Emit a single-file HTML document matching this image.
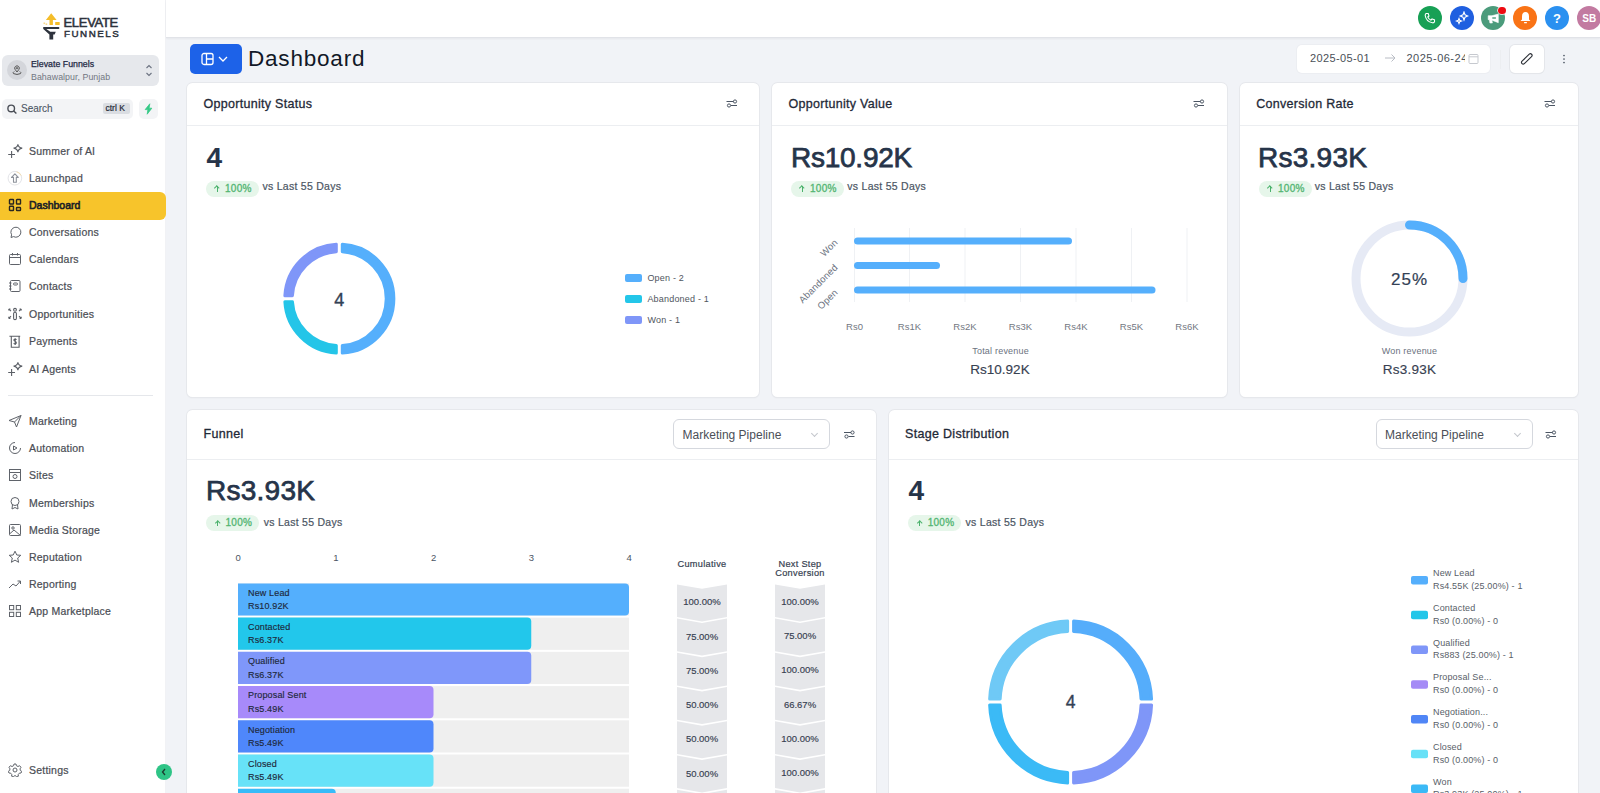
<!DOCTYPE html>
<html><head><meta charset="utf-8">
<style>
*{box-sizing:border-box;margin:0;padding:0}
html,body{width:1600px;height:793px;overflow:hidden;background:#f1f3f7;font-family:"Liberation Sans",sans-serif;color:#1f2937}
.a{position:absolute}
.t{position:absolute;white-space:nowrap;line-height:1}
#sb{position:absolute;left:0;top:0;width:166px;height:793px;background:#fff;border-right:1px solid #f1f2f5}
#top{position:absolute;left:166px;top:0;width:1434px;height:38px;background:#fff;border-bottom:1px solid #e1e3e8;box-shadow:0 1px 2px rgba(0,0,0,.05)}
.card{position:absolute;background:#fff;border-radius:5.5px;box-shadow:0 0 0 1px #e6e8ec,0 1px 1.5px rgba(0,0,0,.07)}
.ch{position:absolute;left:0;right:0;top:0;border-bottom:1px solid #eceef1}
.ttl{position:absolute;font-size:12.5px;color:#1f2937;white-space:nowrap;line-height:1}
.big{position:absolute;font-size:28px;font-weight:400;-webkit-text-stroke:.75px #263449;color:#263449;white-space:nowrap;line-height:1}
.badge{position:absolute;height:16px;width:53px;border-radius:8px;background:#e6f6ea;color:#52b572;font-size:10px;letter-spacing:.27px;-webkit-text-stroke:.3px #52b572;line-height:16px;white-space:nowrap}
.vs{position:absolute;font-size:10.5px;color:#4b5563;letter-spacing:.27px;-webkit-text-stroke:.2px #4b5563;white-space:nowrap;line-height:1}
.nav{position:absolute;left:0;width:166px;height:28px}
.nav span{position:absolute;left:29px;top:9.1px;font-size:10.5px;color:#4b4e55;-webkit-text-stroke:.22px #4b4e55;letter-spacing:.22px;line-height:1;white-space:nowrap}
.nav svg{position:absolute;left:8px;top:7px}
.circ{position:absolute;width:24px;height:24px;border-radius:50%;top:6px}
.lg{position:absolute;font-size:9px;color:#50555e;white-space:nowrap;line-height:1;letter-spacing:.2px}
.sw{position:absolute;width:17px;height:8px;border-radius:2px}

.ttl{letter-spacing:.3px;-webkit-text-stroke:.3px #1f2937}
.badge .arw{position:absolute;left:8.5px;top:4.5px;width:6px;height:7px}
.badge .arw:before{content:"";position:absolute;left:2.5px;top:1px;width:.9px;height:5.5px;background:#4bb26c}
.badge .arw:after{content:"";position:absolute;left:1.1px;top:1.3px;width:2.5px;height:2.5px;border-left:.9px solid #4bb26c;border-top:.9px solid #4bb26c;transform:rotate(45deg)}
.badge .pc{position:absolute;left:19.5px;top:0}
.rot{transform-origin:100% 50%;transform:rotate(-45deg)}

.sel{position:absolute;width:157px;height:29.5px;border:1px solid #d5d8de;border-radius:6px;background:#fff}
.sel span{position:absolute;left:8.6px;top:8.8px;font-size:12px;color:#4b4f57;line-height:1;white-space:nowrap}
.sel:after{content:"";position:absolute;right:12px;top:10.5px;width:4px;height:4px;border-right:1px solid #c3c6cc;border-bottom:1px solid #c3c6cc;transform:rotate(45deg)}
.fl{position:absolute;font-size:9px;color:#1e293b;line-height:1;white-space:nowrap;letter-spacing:.15px;-webkit-text-stroke:.15px #1e293b}
.pct{position:absolute;width:70px;text-align:center;font-size:9.5px;color:#374151;line-height:1;white-space:nowrap;-webkit-text-stroke:.15px #374151}
.fhd{position:absolute;width:100px;text-align:center;font-size:9.2px;letter-spacing:.3px;color:#374151;line-height:1;white-space:nowrap;-webkit-text-stroke:.2px #374151}
.lg2{position:absolute;font-size:9px;color:#585e68;line-height:1;white-space:nowrap;letter-spacing:.15px}
</style></head><body>

<!-- SIDEBAR -->
<div id="sb">
  <!-- logo -->
  <svg class="a" style="left:38px;top:8px" width="26" height="36" viewBox="38 8 26 36">
    <path d="M51.2 13.3 L56.6 20.1 L52.9 20.1 L52.9 24.9 L49.5 24.9 L49.5 20.1 L45.9 20.1 Z" fill="#f4bd2a"/>
    <rect x="55.2" y="22" width="4.5" height="3" rx=".5" fill="#f4bd2a"/>
    <rect x="43.5" y="22.5" width="1.6" height="1.6" fill="#f7d88a"/>
    <rect x="45.6" y="23.4" width="1.6" height="1.6" fill="#f7d88a"/>
    <rect x="43" y="27.1" width="16.4" height="1.9" rx=".9" fill="#2d323c"/>
    <path d="M43.3 29 L46.3 29 L50.3 31.8 L55.8 31.8 L54.6 34.4 L53.2 34.4 L53.2 39.6 L49.4 39.6 L49.4 34.6 Z" fill="#2d323c"/>
  </svg>
  <div class="t" style="left:63.5px;top:15.6px;font-size:13px;color:#2d323c;letter-spacing:-.3px;-webkit-text-stroke:.55px #2d323c">ELEVATE</div>
  <div class="t" style="left:64px;top:28.6px;font-size:9.8px;color:#2d323c;letter-spacing:1.5px;-webkit-text-stroke:.45px #2d323c">FUNNELS</div>

  <!-- account -->
  <div class="a" style="left:2px;top:55px;width:157px;height:31px;border-radius:6px;background:#e6e8ec"></div>
  <div class="a" style="left:7px;top:60px;width:20px;height:20px;border-radius:50%;background:#d4d6db"></div>
  <svg class="a" style="left:11px;top:64px" width="12" height="12" viewBox="0 0 12 12" fill="none" stroke="#555" stroke-width="1"><path d="M6 8 L4.2 5.6 A2.3 2.3 0 1 1 7.8 5.6 Z"/><circle cx="6" cy="4.2" r=".7"/><path d="M3.2 7.5 Q1.5 8.5 2.5 9.6 Q6 11.3 9.5 9.6 Q10.5 8.5 8.8 7.5"/></svg>
  <div class="t" style="left:31px;top:59.5px;font-size:8.8px;color:#1f2a44;-webkit-text-stroke:.25px #1f2a44">Elevate Funnels</div>
  <div class="t" style="left:31px;top:72.8px;font-size:8.8px;color:#727782;letter-spacing:.05px">Bahawalpur, Punjab</div>
  <svg class="a" style="left:144px;top:63px" width="10" height="15" viewBox="0 0 10 15" fill="none" stroke="#6b7280" stroke-width="1.1"><path d="M2.5 5 L5 2.5 L7.5 5"/><path d="M2.5 10 L5 12.5 L7.5 10"/></svg>

  <!-- search -->
  <div class="a" style="left:2px;top:99px;width:131px;height:20px;border-radius:5px;background:#f3f4f6"></div>
  <svg class="a" style="left:6px;top:103px" width="12" height="12" viewBox="0 0 12 12" fill="none" stroke="#4a4e56" stroke-width="1.4"><circle cx="5.2" cy="5.4" r="3.3"/><path d="M7.7 7.9 L10.4 10.6"/></svg>
  <div class="t" style="left:21px;top:103.6px;font-size:10px;color:#4b5563;-webkit-text-stroke:.1px #4b5563">Search</div>
  <div class="a" style="left:103px;top:103px;width:27px;height:11px;border-radius:2px;background:#dadde2"></div>
  <div class="t" style="left:105.5px;top:104px;font-size:8.5px;color:#1f2937;-webkit-text-stroke:.2px #1f2937">ctrl K</div>
  <div class="a" style="left:139px;top:99px;width:19px;height:20px;border-radius:5px;background:#f3f4f6"></div>
  <svg class="a" style="left:143px;top:103px" width="11" height="12" viewBox="0 0 11 12"><path d="M6.8 0.8 L2.2 6.6 L4.9 6.6 L4.2 11.2 L8.8 5.2 L6.1 5.2 Z" fill="#36c987" stroke="#36c987" stroke-width=".8" stroke-linejoin="round"/></svg>

  <!-- nav -->
  <div class="nav" style="top:137px"><svg width="16" height="16" viewBox="0 0 16 16" fill="none" stroke="#5b5f66" stroke-width="1.1" style="left:7px;top:6px"><path d="M1.2 11.5 H8 M4.6 8.1 V14.9"/><path d="M10.9 1.2 Q11.3 4.6 15.2 5.1 Q11.3 5.6 10.9 9.2 Q10.5 5.6 6.6 5.1 Q10.5 4.6 10.9 1.2 Z"/></svg><span>Summer of AI</span></div>
  <div class="nav" style="top:164px"><svg width="16" height="16" viewBox="0 0 16 16" fill="none" style="left:7px;top:6px"><circle cx="7.9" cy="8.2" r="6.8" stroke="#e3e4e8" stroke-width="1"/><path d="M9.5 1.8 A6.8 6.8 0 0 1 14.2 5.6" stroke="#f3dcb0" stroke-width="1"/><path d="M7.9 3.8 L11.3 7.4 L9.3 7.4 L9.3 12.3 L6.5 12.3 L6.5 7.4 L4.5 7.4 Z" stroke="#8d929b" stroke-width="1.1" stroke-linejoin="round"/></svg><span>Launchpad</span></div>
  <div class="a" style="left:-6px;top:192px;width:172px;height:28px;border-radius:6px;background:#f7c42b"></div>
  <div class="nav" style="top:191px"><svg width="14" height="14" viewBox="0 0 14 14" fill="none" stroke="#2a2620" stroke-width="1.4"><rect x="1.5" y="1.5" width="4" height="4.5" rx=".6"/><rect x="8.5" y="1.5" width="4" height="4.5" rx=".6"/><rect x="1.5" y="8.3" width="4" height="4.2" rx=".6"/><rect x="8.5" y="9.5" width="4" height="3" rx=".6"/></svg><span style="color:#1c1f26;-webkit-text-stroke:.6px #1c1f26;letter-spacing:0;top:8.5px">Dashboard</span></div>
  <div class="nav" style="top:218px"><svg width="14" height="14" viewBox="0 0 14 14" fill="none" stroke="#5f636a" stroke-width="1"><path d="M3 12.5 L3.6 9.8 A5 5 0 1 1 5.5 11.6 Z"/></svg><span>Conversations</span></div>
  <div class="nav" style="top:245px"><svg width="14" height="14" viewBox="0 0 14 14" fill="none" stroke="#5f636a" stroke-width="1"><rect x="1.5" y="2.5" width="11" height="10" rx="1"/><path d="M1.5 5.5 H12.5 M4.5 1 V3.5 M9.5 1 V3.5"/></svg><span>Calendars</span></div>
  <div class="nav" style="top:272px"><svg width="14" height="14" viewBox="0 0 14 14" fill="none" stroke="#5f636a" stroke-width="1"><rect x="2.5" y="1.5" width="9.5" height="11" rx="1"/><path d="M1 4 H3.5 M1 7 H3.5 M1 10 H3.5"/><rect x="5.5" y="4" width="4" height="2" rx="1"/></svg><span>Contacts</span></div>
  <div class="nav" style="top:300px"><svg width="16" height="16" viewBox="0 0 16 16" fill="none" stroke="#5b5f66" stroke-width="1.1" style="left:7px;top:6px"><circle cx="8" cy="3.8" r="1.4"/><rect x="6.6" y="6.2" width="2.8" height="7.4" rx="1.4"/><path d="M1.8 3 L4 5.2 M1.8 3 V4.6 M1.8 3 H3.4 M14.2 3 L12 5.2 M14.2 3 V4.6 M14.2 3 H12.6 M1.8 12.4 L4 10.2 M1.8 12.4 V10.8 M1.8 12.4 H3.4 M14.2 12.4 L12 10.2 M14.2 12.4 V10.8 M14.2 12.4 H12.6"/></svg><span>Opportunities</span></div>
  <div class="nav" style="top:327px"><svg width="16" height="16" viewBox="0 0 16 16" fill="none" stroke="#5b5f66" stroke-width="1.1" style="left:7px;top:6px"><path d="M2.4 3.2 H13.2 M4.3 3.2 V14.2 H12.1 V3.2"/><path d="M9.6 6.6 Q8.2 5.6 7.1 6.5 Q6.4 7.5 8.2 8.4 Q9.9 9.3 9 10.6 Q7.9 11.4 6.6 10.4 M8.2 5.2 V12"/></svg><span>Payments</span></div>
  <div class="nav" style="top:355px"><svg width="16" height="16" viewBox="0 0 16 16" fill="none" stroke="#5b5f66" stroke-width="1.1" style="left:7px;top:6px"><path d="M1.2 11.5 H8 M4.6 8.1 V14.9"/><path d="M10.9 1.2 Q11.3 4.6 15.2 5.1 Q11.3 5.6 10.9 9.2 Q10.5 5.6 6.6 5.1 Q10.5 4.6 10.9 1.2 Z"/></svg><span>AI Agents</span></div>

  <div class="a" style="left:8px;top:395px;width:145px;height:1px;background:#e5e7eb"></div>

  <div class="nav" style="top:407px"><svg width="14" height="14" viewBox="0 0 14 14" fill="none" stroke="#5f636a" stroke-width="1"><path d="M1 6.5 L13 1.5 L8.5 13 L6.5 8 Z M6.5 8 L13 1.5"/></svg><span>Marketing</span></div>
  <div class="nav" style="top:434px"><svg width="14" height="14" viewBox="0 0 14 14" fill="none" stroke="#5f636a" stroke-width="1"><path d="M12.5 7 A5.5 5.5 0 1 1 7 1.5"/><path d="M5.5 5 L9 7 L5.5 9 Z"/></svg><span>Automation</span></div>
  <div class="nav" style="top:461px"><svg width="14" height="14" viewBox="0 0 14 14" fill="none" stroke="#5f636a" stroke-width="1"><rect x="1.5" y="1.5" width="11" height="11"/><path d="M1.5 4.5 H12.5"/><circle cx="7" cy="8.5" r="2"/></svg><span>Sites</span></div>
  <div class="nav" style="top:489px"><svg width="14" height="14" viewBox="0 0 14 14" fill="none" stroke="#5f636a" stroke-width="1"><circle cx="7" cy="5.5" r="4"/><path d="M4.5 8.5 L4 13 L7 11.5 L10 13 L9.5 8.5"/></svg><span>Memberships</span></div>
  <div class="nav" style="top:516px"><svg width="14" height="14" viewBox="0 0 14 14" fill="none" stroke="#5f636a" stroke-width="1"><rect x="1.5" y="1.5" width="11" height="11" rx="1"/><circle cx="5" cy="5" r="1.2"/><path d="M1.5 11 L6 7 L12.5 12.5"/></svg><span>Media Storage</span></div>
  <div class="nav" style="top:543px"><svg width="14" height="14" viewBox="0 0 14 14" fill="none" stroke="#5f636a" stroke-width="1"><path d="M7 1.2 L8.8 5 L12.8 5.3 L9.7 8 L10.6 12.3 L7 10.1 L3.4 12.3 L4.3 8 L1.2 5.3 L5.2 5 Z"/></svg><span>Reputation</span></div>
  <div class="nav" style="top:570px"><svg width="14" height="14" viewBox="0 0 14 14" fill="none" stroke="#5f636a" stroke-width="1"><path d="M1 11 L5 7 L8 9 L12.5 4 M9.5 4 H12.5 V7"/></svg><span>Reporting</span></div>
  <div class="nav" style="top:597px"><svg width="14" height="14" viewBox="0 0 14 14" fill="none" stroke="#5f636a" stroke-width="1"><rect x="1.5" y="1.5" width="4.2" height="4.2"/><rect x="8.3" y="1.5" width="4.2" height="4.2"/><rect x="1.5" y="8.3" width="4.2" height="4.2"/><rect x="8.3" y="8.3" width="4.2" height="4.2"/></svg><span>App Marketplace</span></div>

  <div class="nav" style="top:756px"><svg width="14" height="14" viewBox="0 0 14 14" fill="none" stroke="#5f636a" stroke-width="1"><circle cx="7" cy="7" r="2"/><path d="M6 1 H8 L8.4 2.7 L10 3.5 L11.6 2.7 L13 4.3 L12 5.9 L12.4 7.6 L13.8 8.4 L13 10 L11.3 10.2 L10.2 11.6 L10.4 13.2 L8.5 13.5 L7 12.5 L5.5 13.5 L3.6 13.2 L3.8 11.6 L2.7 10.2 L1 10 L0.2 8.4 L1.6 7.6 L2 5.9 L1 4.3 L2.4 2.7 L4 3.5 L5.6 2.7 Z"/></svg><span>Settings</span></div>
  <div class="a" style="left:156px;top:764px;width:16px;height:16px;border-radius:50%;background:#2ec486"></div>
  <svg class="a" style="left:159px;top:767px" width="10" height="10" viewBox="0 0 10 10" fill="none" stroke="#1d3b2f" stroke-width="1.3"><path d="M6 2 L3.5 5 L6 8"/></svg>
</div>

<!-- TOP BAR -->
<div id="top"></div>
<div class="circ" style="left:1418px;background:#17a055"></div>
<svg class="a" style="left:1424px;top:12px" width="12" height="12" viewBox="0 0 12 12" fill="none" stroke="#fff" stroke-width="1.1"><path d="M2.2 1.5 L4.2 1.5 L5 4 L3.8 5 Q5 7.5 7 8.2 L8 7 L10.5 7.8 L10.5 9.8 Q10 11 8.5 10.8 Q2 9.5 1.2 3.5 Q1.2 1.8 2.2 1.5 Z"/></svg>
<div class="circ" style="left:1450px;background:#1f5fe0"></div>
<svg class="a" style="left:1455px;top:11px" width="14" height="14" viewBox="0 0 14 14" fill="none" stroke="#fff" stroke-width="1.1"><path d="M9 1 L10 3.8 L12.8 5 L10 6.2 L9 9 L8 6.2 L5.2 5 L8 3.8 Z"/><path d="M4 7.5 L4.7 9.3 L6.5 10 L4.7 10.7 L4 12.5 L3.3 10.7 L1.5 10 L3.3 9.3 Z"/></svg>
<div class="circ" style="left:1481px;background:#4b9b7b"></div>
<svg class="a" style="left:1486px;top:11px" width="14" height="14" viewBox="0 0 14 14"><path d="M2.2 4.7 H6 L12.3 3.1 V11.7 L6 9.2 H5.9 L6.4 12 H3.9 L3.4 8.7 H2.2 Z" fill="#fff" stroke="#fff" stroke-width=".6" stroke-linejoin="round"/><rect x="6.3" y="6.3" width="3.6" height="1.4" fill="#4b9b7b"/></svg>
<div class="a" style="left:1498px;top:6.8px;width:7.6px;height:7.6px;border-radius:50%;background:#ee0a10;box-shadow:0 0 0 .7px #fff"></div>
<div class="circ" style="left:1513px;background:#f97316"></div>
<svg class="a" style="left:1519px;top:11px" width="13" height="13" viewBox="0 0 13 13"><path d="M6.5 1 Q10 1 10 5.5 V8.5 L11.5 10 H1.5 L3 8.5 V5.5 Q3 1 6.5 1 Z" fill="#fff"/><rect x="5" y="11" width="3" height="1.3" rx=".6" fill="#fff"/></svg>
<div class="circ" style="left:1545px;background:#2a90f0"></div>
<div class="t" style="left:1553px;top:12px;font-size:13px;font-weight:700;color:#fff">?</div>
<div class="circ" style="left:1577px;background:#c27aa1"></div>
<div class="t" style="left:1582.3px;top:13.6px;font-size:10px;font-weight:700;color:#fff">SB</div>

<!-- PAGE HEADER -->
<div class="a" style="left:190px;top:44px;width:52px;height:30px;border-radius:5px;background:#1d62e8"></div>
<svg class="a" style="left:200px;top:51px" width="32" height="16" viewBox="0 0 32 16" fill="none" stroke="#fff" stroke-width="1.3"><rect x="2" y="2.5" width="11" height="11" rx="2"/><path d="M6.5 2.5 V13.5 M6.5 8 H13"/><path d="M19 6 L23 10 L27 6"/></svg>
<div class="t" style="left:248px;top:48px;font-size:22.5px;color:#111827;letter-spacing:.8px">Dashboard</div>

<div class="a" style="left:1297px;top:45px;width:193px;height:28px;border-radius:5px;background:#fff;box-shadow:0 0 0 1px #eceef2"></div>
<div class="t" style="left:1310px;top:53.3px;font-size:11px;color:#4a4f57;letter-spacing:.36px">2025-05-01</div>
<svg class="a" style="left:1384px;top:53px" width="12" height="10" viewBox="0 0 12 10" fill="none" stroke="#b8bcc4" stroke-width="1"><path d="M1 5 H11 M7.5 1.5 L11 5 L7.5 8.5"/></svg>
<div class="a" style="left:1406px;top:50px;width:58.7px;height:16px;overflow:hidden"><div class="t" style="left:.5px;top:3.3px;font-size:11px;color:#4a4f57;letter-spacing:.5px">2025-06-24</div></div>
<svg class="a" style="left:1468px;top:53px" width="11" height="11" viewBox="0 0 11 11" fill="none" stroke="#c6c9cf" stroke-width="1"><rect x="1" y="1.5" width="9" height="9" rx="1"/><path d="M1 3.8 H10"/></svg>
<div class="a" style="left:1500px;top:50px;width:1px;height:19px;background:#eceef1"></div>
<div class="a" style="left:1510px;top:44.5px;width:34px;height:28.7px;border-radius:5px;background:#fff;box-shadow:0 0 0 1px #e4e6ea,0 1px 1px rgba(0,0,0,.05)"></div>
<svg class="a" style="left:1510px;top:44px" width="34" height="30" viewBox="1510 44 34 30" fill="none"><path d="M1523.2 62.4 L1530.4 55.4" stroke="#2b2f36" stroke-width="4.4" stroke-linecap="round"/><path d="M1523.2 62.4 L1530.4 55.4" stroke="#fff" stroke-width="2.2" stroke-linecap="round"/></svg>
<svg class="a" style="left:1561px;top:53px" width="6" height="12" viewBox="0 0 6 12" fill="#4b5563"><circle cx="3" cy="2.5" r=".85"/><circle cx="3" cy="6" r=".85"/><circle cx="3" cy="9.5" r=".85"/></svg>

<!-- CARDS ROW 1 -->
<div class="card" style="left:187px;top:83px;width:572px;height:314px">
  <div class="ch" style="height:43px"></div>
</div>
<div class="card" style="left:772px;top:83px;width:455px;height:314px">
  <div class="ch" style="height:43px"></div>
</div>
<div class="card" style="left:1240px;top:83px;width:338px;height:314px">
  <div class="ch" style="height:43px"></div>
</div>

<!-- CARDS ROW 2 -->
<div class="card" style="left:187px;top:410px;width:689px;height:400px">
  <div class="ch" style="height:50px"></div>
</div>
<div class="card" style="left:889px;top:410px;width:689px;height:400px">
  <div class="ch" style="height:50px"></div>
</div>


<!-- ROW1 CONTENT -->
<div class="ttl" style="left:203.4px;top:98px">Opportunity Status</div>
<div class="ttl" style="left:788.4px;top:98px">Opportunity Value</div>
<div class="ttl" style="left:1256.2px;top:98px">Conversion Rate</div>

<svg class="a" style="left:0;top:0" width="1600" height="793" viewBox="0 0 1600 793">
  <g fill="none" stroke="#4b5563" stroke-width="1">
    <g id="flt"><path d="M726.5 101.5 H733.5 M731 105.5 H737"/><circle cx="735" cy="101.5" r="1.6"/><circle cx="729" cy="105.5" r="1.6"/></g>
    <use href="#flt" x="467"/>
    <use href="#flt" x="818"/>
    <use href="#flt" x="117.5" y="331"/>
    <use href="#flt" x="819" y="331"/>
  </g>
  <!-- donut 1 -->
  <path d="M342.30 244.28 A54.5 54.5 0 0 1 342.30 353.12 L342.30 345.60 A47.0 47.0 0 0 0 342.30 251.80 Z" fill="#55affc" stroke="#55affc" stroke-width="3.0" stroke-linejoin="round"/>
<path d="M336.30 353.12 A54.5 54.5 0 0 1 284.88 301.70 L292.40 301.70 A47.0 47.0 0 0 0 336.30 345.60 Z" fill="#24c5e8" stroke="#24c5e8" stroke-width="3.0" stroke-linejoin="round"/>
<path d="M284.88 295.70 A54.5 54.5 0 0 1 336.30 244.28 L336.30 251.80 A47.0 47.0 0 0 0 292.40 295.70 Z" fill="#7f96f8" stroke="#7f96f8" stroke-width="3.0" stroke-linejoin="round"/>
  
  
  <!-- legend 1 -->
  <rect x="625" y="274" width="17" height="8" rx="2" fill="#55affc"/>
  <rect x="625" y="295" width="17" height="8" rx="2" fill="#23c6e9"/>
  <rect x="625" y="316" width="17" height="8" rx="2" fill="#7f96f8"/>
  <!-- bar chart -->
  <g stroke="#eff1f4" stroke-width="1">
    <path d="M854.5 228 V302 M909.5 228 V302 M965 228 V302 M1020.5 228 V302 M1076 228 V302 M1131.5 228 V302 M1187 228 V302"/>
  </g>
  <g stroke="#55affc" stroke-width="7" stroke-linecap="round">
    <path d="M857.5 241 H1068.5"/>
    <path d="M857.5 265.5 H936.5"/>
    <path d="M857.5 290 H1152"/>
  </g>
  <!-- conversion ring -->
  <circle cx="1409.5" cy="278.5" r="53.5" fill="none" stroke="#e6eaf5" stroke-width="9"/>
  <path d="M1409.5 225 A53.5 53.5 0 0 1 1463 278.5" fill="none" stroke="#55affc" stroke-width="9" stroke-linecap="round"/>
</svg>

<div class="big" style="left:206.5px;top:144px;font-weight:700;-webkit-text-stroke:.1px #263449">4</div>
<div class="big" style="left:791px;top:144px;letter-spacing:-.25px">Rs10.92K</div>
<div class="big" style="left:1258px;top:144px;letter-spacing:.25px">Rs3.93K</div>

<div class="badge" style="left:205.5px;top:180.5px"><span class="arw"></span><span class="pc">100%</span></div>
<div class="badge" style="left:790.5px;top:180.5px"><span class="arw"></span><span class="pc">100%</span></div>
<div class="badge" style="left:1258.5px;top:180.5px"><span class="arw"></span><span class="pc">100%</span></div>
<div class="vs" style="left:262.5px;top:181px">vs Last 55 Days</div>
<div class="vs" style="left:847.3px;top:181px">vs Last 55 Days</div>
<div class="vs" style="left:1314.7px;top:181px">vs Last 55 Days</div>

<div class="t" style="left:319.3px;width:40px;text-align:center;top:291px;font-size:18px;color:#334155;-webkit-text-stroke:.35px #334155">4</div>
<div class="lg" style="left:647.4px;top:273.6px">Open - 2</div>
<div class="lg" style="left:647.4px;top:294.6px">Abandoned - 1</div>
<div class="lg" style="left:647.4px;top:315.6px">Won - 1</div>

<div class="lg" style="left:824.5px;width:60px;text-align:center;top:321.8px;color:#737882;font-size:9.5px;letter-spacing:.05px">Rs0</div>
<div class="lg" style="left:879.5px;width:60px;text-align:center;top:321.8px;color:#737882;font-size:9.5px;letter-spacing:.05px">Rs1K</div>
<div class="lg" style="left:935px;width:60px;text-align:center;top:321.8px;color:#737882;font-size:9.5px;letter-spacing:.05px">Rs2K</div>
<div class="lg" style="left:990.5px;width:60px;text-align:center;top:321.8px;color:#737882;font-size:9.5px;letter-spacing:.05px">Rs3K</div>
<div class="lg" style="left:1046px;width:60px;text-align:center;top:321.8px;color:#737882;font-size:9.5px;letter-spacing:.05px">Rs4K</div>
<div class="lg" style="left:1101.5px;width:60px;text-align:center;top:321.8px;color:#737882;font-size:9.5px;letter-spacing:.05px">Rs5K</div>
<div class="lg" style="left:1157px;width:60px;text-align:center;top:321.8px;color:#737882;font-size:9.5px;letter-spacing:.05px">Rs6K</div>
<div class="lg rot" style="left:776px;top:236px;width:60px;text-align:right;color:#6b7280;font-size:9.5px">Won</div>
<div class="lg rot" style="left:756px;top:261px;width:80px;text-align:right;color:#6b7280;font-size:9.5px">Abandoned</div>
<div class="lg rot" style="left:776px;top:286px;width:60px;text-align:right;color:#6b7280;font-size:9.5px">Open</div>

<div class="lg" style="left:950.6px;width:100px;text-align:center;top:346.8px;color:#6b7280">Total revenue</div>
<div class="t" style="left:950px;width:100px;text-align:center;top:363.2px;font-size:13.5px;color:#374151;-webkit-text-stroke:.15px #374151">Rs10.92K</div>

<div class="t" style="left:1369.5px;width:80px;text-align:center;top:270.8px;font-size:17px;color:#334155;letter-spacing:1px;-webkit-text-stroke:.2px #334155">25%</div>
<div class="lg" style="left:1359.5px;width:100px;text-align:center;top:347px;color:#6b7280">Won revenue</div>
<div class="t" style="left:1359.5px;width:100px;text-align:center;top:363px;font-size:13.5px;color:#374151;letter-spacing:.25px;-webkit-text-stroke:.15px #374151">Rs3.93K</div>


<!-- ROW2 CONTENT -->
<div class="ttl" style="left:203.6px;top:428.3px">Funnel</div>
<div class="ttl" style="left:905.1px;top:428.3px">Stage Distribution</div>
<div class="sel" style="left:673px;top:419px"><span>Marketing Pipeline</span></div>
<div class="sel" style="left:1375.5px;top:419px"><span>Marketing Pipeline</span></div>
<div class="big" style="left:206px;top:477.3px;letter-spacing:.25px">Rs3.93K</div>
<div class="big" style="left:908.5px;top:477.3px;font-weight:700;-webkit-text-stroke:.1px #263449">4</div>
<div class="badge" style="left:206px;top:515px"><span class="arw"></span><span class="pc">100%</span></div>
<div class="badge" style="left:908.2px;top:515px"><span class="arw"></span><span class="pc">100%</span></div>
<div class="vs" style="left:263.7px;top:516.8px">vs Last 55 Days</div>
<div class="vs" style="left:965.6px;top:516.8px">vs Last 55 Days</div>

<svg class="a" style="left:0;top:0" width="1600" height="793" viewBox="0 0 1600 793">
<rect x="238" y="583.40" width="391" height="32.2" fill="#efefef"/>
<path d="M238 583.40 H625.00 Q629.00 583.40 629.00 587.40 V611.60 Q629.00 615.60 625.00 615.60 H238 Z" fill="#54affd"/>
<path d="M677 584.40 L702 588.80 L727 584.40 V617.00 L702 621.40 L677 617.00 Z" fill="#e6e7ea"/>
<path d="M775 584.40 L800 588.80 L825 584.40 V617.00 L800 621.40 L775 617.00 Z" fill="#e6e7ea"/>
<rect x="238" y="617.62" width="391" height="32.2" fill="#efefef"/>
<path d="M238 617.62 H527.25 Q531.25 617.62 531.25 621.62 V645.83 Q531.25 649.83 527.25 649.83 H238 Z" fill="#22c7eb"/>
<path d="M677 618.62 L702 623.02 L727 618.62 V651.23 L702 655.62 L677 651.23 Z" fill="#e6e7ea"/>
<path d="M775 618.62 L800 623.02 L825 618.62 V651.23 L800 655.62 L775 651.23 Z" fill="#e6e7ea"/>
<rect x="238" y="651.85" width="391" height="32.2" fill="#efefef"/>
<path d="M238 651.85 H527.25 Q531.25 651.85 531.25 655.85 V680.05 Q531.25 684.05 527.25 684.05 H238 Z" fill="#7f97fa"/>
<path d="M677 652.85 L702 657.25 L727 652.85 V685.45 L702 689.85 L677 685.45 Z" fill="#e6e7ea"/>
<path d="M775 652.85 L800 657.25 L825 652.85 V685.45 L800 689.85 L775 685.45 Z" fill="#e6e7ea"/>
<rect x="238" y="686.08" width="391" height="32.2" fill="#efefef"/>
<path d="M238 686.08 H429.50 Q433.50 686.08 433.50 690.08 V714.28 Q433.50 718.28 429.50 718.28 H238 Z" fill="#a78afa"/>
<path d="M677 687.08 L702 691.48 L727 687.08 V719.68 L702 724.08 L677 719.68 Z" fill="#e6e7ea"/>
<path d="M775 687.08 L800 691.48 L825 687.08 V719.68 L800 724.08 L775 719.68 Z" fill="#e6e7ea"/>
<rect x="238" y="720.30" width="391" height="32.2" fill="#efefef"/>
<path d="M238 720.30 H429.50 Q433.50 720.30 433.50 724.30 V748.50 Q433.50 752.50 429.50 752.50 H238 Z" fill="#4f87fb"/>
<path d="M677 721.30 L702 725.70 L727 721.30 V753.90 L702 758.30 L677 753.90 Z" fill="#e6e7ea"/>
<path d="M775 721.30 L800 725.70 L825 721.30 V753.90 L800 758.30 L775 753.90 Z" fill="#e6e7ea"/>
<rect x="238" y="754.52" width="391" height="32.2" fill="#efefef"/>
<path d="M238 754.52 H429.50 Q433.50 754.52 433.50 758.52 V782.73 Q433.50 786.73 429.50 786.73 H238 Z" fill="#67e2f8"/>
<path d="M677 755.52 L702 759.92 L727 755.52 V788.12 L702 792.52 L677 788.12 Z" fill="#e6e7ea"/>
<path d="M775 755.52 L800 759.92 L825 755.52 V788.12 L800 792.52 L775 788.12 Z" fill="#e6e7ea"/>
<rect x="238" y="788.75" width="391" height="32.2" fill="#efefef"/>
<path d="M238 788.75 H331.75 Q335.75 788.75 335.75 792.75 V816.95 Q335.75 820.95 331.75 820.95 H238 Z" fill="#38bbf8"/>
<path d="M677 789.75 L702 794.15 L727 789.75 V822.35 L702 826.75 L677 822.35 Z" fill="#e6e7ea"/>
<path d="M775 789.75 L800 794.15 L825 789.75 V822.35 L800 826.75 L775 822.35 Z" fill="#e6e7ea"/>
<path d="M1073.60 621.06 A81.0 81.0 0 0 1 1151.54 699.00 L1141.04 699.00 A70.5 70.5 0 0 0 1073.60 631.56 Z" fill="#55adfb" stroke="#55adfb" stroke-width="3.0" stroke-linejoin="round"/>
<path d="M1151.54 705.00 A81.0 81.0 0 0 1 1073.60 782.94 L1073.60 772.44 A70.5 70.5 0 0 0 1141.04 705.00 Z" fill="#7f96f8" stroke="#7f96f8" stroke-width="3.0" stroke-linejoin="round"/>
<path d="M1067.60 782.94 A81.0 81.0 0 0 1 989.66 705.00 L1000.16 705.00 A70.5 70.5 0 0 0 1067.60 772.44 Z" fill="#3bbaf6" stroke="#3bbaf6" stroke-width="3.0" stroke-linejoin="round"/>
<path d="M989.66 699.00 A81.0 81.0 0 0 1 1067.60 621.06 L1067.60 631.56 A70.5 70.5 0 0 0 1000.16 699.00 Z" fill="#6fc9f6" stroke="#6fc9f6" stroke-width="3.0" stroke-linejoin="round"/>



<rect x="1411" y="576.00" width="17" height="8.5" rx="2" fill="#55affc"/>
<rect x="1411" y="610.75" width="17" height="8.5" rx="2" fill="#23c6e9"/>
<rect x="1411" y="645.50" width="17" height="8.5" rx="2" fill="#7f96f8"/>
<rect x="1411" y="680.25" width="17" height="8.5" rx="2" fill="#a58bf6"/>
<rect x="1411" y="715.00" width="17" height="8.5" rx="2" fill="#5086f6"/>
<rect x="1411" y="749.75" width="17" height="8.5" rx="2" fill="#67e1f7"/>
<rect x="1411" y="784.50" width="17" height="8.5" rx="2" fill="#3bb9f6"/>
</svg>
<div class="lg" style="left:218.3px;width:40px;text-align:center;top:553px;color:#4b5563;font-size:9.5px">0</div>
<div class="lg" style="left:316.1px;width:40px;text-align:center;top:553px;color:#4b5563;font-size:9.5px">1</div>
<div class="lg" style="left:413.8px;width:40px;text-align:center;top:553px;color:#4b5563;font-size:9.5px">2</div>
<div class="lg" style="left:511.5px;width:40px;text-align:center;top:553px;color:#4b5563;font-size:9.5px">3</div>
<div class="lg" style="left:609.3px;width:40px;text-align:center;top:553px;color:#4b5563;font-size:9.5px">4</div>
<div class="lg2" style="left:1433px;top:569.00px">New Lead</div>
<div class="lg2" style="left:1433px;top:581.80px">Rs4.55K (25.00%) - 1</div>
<div class="lg2" style="left:1433px;top:603.75px">Contacted</div>
<div class="lg2" style="left:1433px;top:616.55px">Rs0 (0.00%) - 0</div>
<div class="lg2" style="left:1433px;top:638.50px">Qualified</div>
<div class="lg2" style="left:1433px;top:651.30px">Rs883 (25.00%) - 1</div>
<div class="lg2" style="left:1433px;top:673.25px">Proposal Se...</div>
<div class="lg2" style="left:1433px;top:686.05px">Rs0 (0.00%) - 0</div>
<div class="lg2" style="left:1433px;top:708.00px">Negotiation...</div>
<div class="lg2" style="left:1433px;top:720.80px">Rs0 (0.00%) - 0</div>
<div class="lg2" style="left:1433px;top:742.75px">Closed</div>
<div class="lg2" style="left:1433px;top:755.55px">Rs0 (0.00%) - 0</div>
<div class="lg2" style="left:1433px;top:777.50px">Won</div>
<div class="lg2" style="left:1433px;top:790.30px">Rs3.93K (25.00%) - 1</div>
<div class="fhd" style="left:652px;top:560px">Cumulative</div>
<div class="fhd" style="left:750px;top:560px">Next Step</div>
<div class="fhd" style="left:750px;top:569.2px">Conversion</div>
<div class="t" style="left:1050.6px;width:40px;text-align:center;top:694px;font-size:17.5px;color:#334155;-webkit-text-stroke:.35px #334155">4</div>
<div class="fl" style="left:248px;top:588.70px">New Lead</div>
<div class="fl" style="left:248px;top:602.20px">Rs10.92K</div>
<div class="pct" style="left:667px;top:597.40px">100.00%</div>
<div class="pct" style="left:765px;top:596.90px">100.00%</div>
<div class="fl" style="left:248px;top:622.92px">Contacted</div>
<div class="fl" style="left:248px;top:636.42px">Rs6.37K</div>
<div class="pct" style="left:667px;top:631.62px">75.00%</div>
<div class="pct" style="left:765px;top:631.12px">75.00%</div>
<div class="fl" style="left:248px;top:657.15px">Qualified</div>
<div class="fl" style="left:248px;top:670.65px">Rs6.37K</div>
<div class="pct" style="left:667px;top:665.85px">75.00%</div>
<div class="pct" style="left:765px;top:665.35px">100.00%</div>
<div class="fl" style="left:248px;top:691.38px">Proposal Sent</div>
<div class="fl" style="left:248px;top:704.88px">Rs5.49K</div>
<div class="pct" style="left:667px;top:700.08px">50.00%</div>
<div class="pct" style="left:765px;top:699.58px">66.67%</div>
<div class="fl" style="left:248px;top:725.60px">Negotiation</div>
<div class="fl" style="left:248px;top:739.10px">Rs5.49K</div>
<div class="pct" style="left:667px;top:734.30px">50.00%</div>
<div class="pct" style="left:765px;top:733.80px">100.00%</div>
<div class="fl" style="left:248px;top:759.82px">Closed</div>
<div class="fl" style="left:248px;top:773.32px">Rs5.49K</div>
<div class="pct" style="left:667px;top:768.52px">50.00%</div>
<div class="pct" style="left:765px;top:768.02px">100.00%</div>
<div class="fl" style="left:248px;top:794.05px">Won</div>
<div class="fl" style="left:248px;top:807.55px">Rs3.93K</div>
<div class="pct" style="left:667px;top:802.75px">25.00%</div>
<div class="pct" style="left:765px;top:802.25px">71.43%</div>
</body></html>
